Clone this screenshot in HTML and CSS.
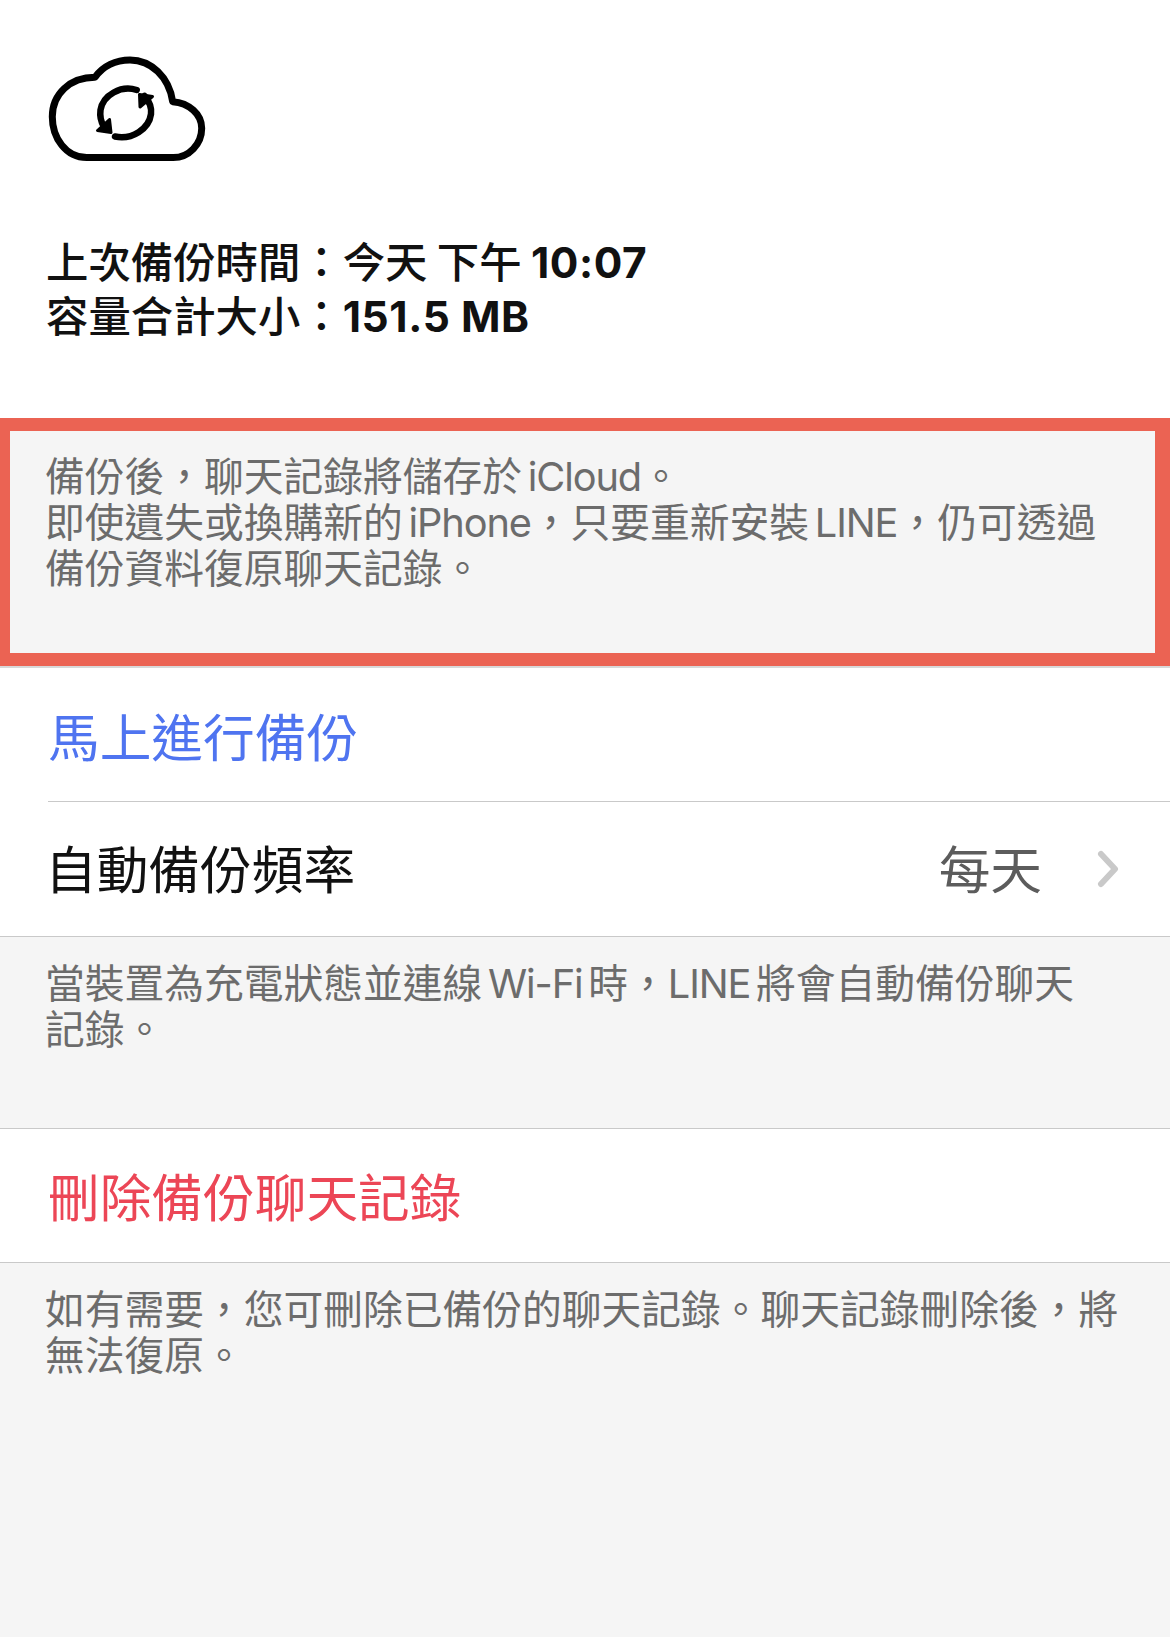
FILE: index.html
```html
<!DOCTYPE html>
<html lang="zh-Hant">
<head>
<meta charset="utf-8">
<title>備份聊天記錄</title>
<link rel="stylesheet" href="styles.css">
</head>
<body>
<section class="summary">
  <svg class="cloud" viewBox="27 25 160 108" aria-hidden="true">
    <path class="cloud-line" d="M66.7 127.6C46 127.6 32.3 108 32.3 86.7C32.3 64 50 47.3 75 47.3C83 36 96 30 110 30C131 30 149 47 152.7 71.7C169 73 181.7 84 181.7 98.3C181.7 114 169 127.6 153.3 127.6Z"/>
    <path class="sync-line" d="M116.7 60C101 55 83 65 80.5 80C79.7 86 81 92 84 97"/>
    <path class="sync-line" d="M95 106.5C112 110 129 99 131 84C131.8 77 129 71 124.5 66"/>
    <path class="sync-head" d="M77.5 100.5L91 102.5L89.5 89.5Z"/>
    <path class="sync-head" d="M132.5 66.5L119.5 64.5L120 77Z"/>
  </svg>
  <p class="stats">上次備份時間：今天 下午 <b class="stats-num">10:07</b><br>容量合計大小：<b class="stats-num">151.5 MB</b></p>
</section>
<section class="note note-marked">
  <p class="note-text">備份後，聊天記錄將儲存於 <span class="latin">iCloud</span>。<br>即使遺失或換購新的 <span class="latin">iPhone</span>，只要重新安裝 <span class="latin">LINE</span>，仍可透過<br>備份資料復原聊天記錄。</p>
</section>
<section class="group group-first">
  <div class="row row-link">馬上進行備份</div>
  <div class="row row-split">
    <span class="row-label">自動備份頻率</span>
    <span class="row-value">每天</span>
    <svg class="chevron" viewBox="0 0 24 38" aria-hidden="true"><path d="M5 4L19 19L5 34"/></svg>
  </div>
</section>
<section class="note note-auto">
  <p class="note-text">當裝置為充電狀態並連線 <span class="latin">Wi-Fi</span> 時，<span class="latin">LINE</span> 將會自動備份聊天<br>記錄。</p>
</section>
<section class="group">
  <div class="row row-danger">刪除備份聊天記錄</div>
</section>
<section class="note note-last">
  <p class="note-text">如有需要，您可刪除已備份的聊天記錄。聊天記錄刪除後，將<br>無法復原。</p>
</section>
</body>
</html>
```
FILE: styles.css
```css
* { box-sizing: border-box; }
html, body { margin: 0; padding: 0; }
body {
  width: 1170px;
  height: 1637px;
  overflow: hidden;
  background: #f5f5f5;
  font-family: Inter, "Noto Sans CJK TC", sans-serif;
}
p { margin: 0; }
.summary {
  height: 418px;
  background: #fff;
  padding: 55px 0 0 47px;
}
.cloud { display: block; width: 160px; height: 108px; }
.cloud-line, .sync-line {
  fill: none;
  stroke: #000;
  stroke-linejoin: round;
  stroke-linecap: round;
}
.cloud-line { stroke-width: 7; }
.sync-line { stroke-width: 6.5; }
.sync-head { fill: #000; stroke: #000; stroke-width: 3; stroke-linejoin: round; }
.stats {
  margin: 73px 0 0 -1px;
  font-size: 42.4px;
  line-height: 54px;
  font-weight: 500;
  color: #111;
  word-spacing: -2px;
}
.stats-num { font-weight: 700; letter-spacing: 0.6px; word-spacing: 0; }
.note-text {
  font-size: 39.75px;
  line-height: 46px;
  color: #6c6c6c;
  word-spacing: -5.5px;
}
.latin { letter-spacing: -1.1px; }
.note { padding-left: 45px; }
.note-marked {
  height: 248px;
  padding: 23px 0 0 35px;
  border-style: solid;
  border-color: #eb6353;
  border-width: 13px 15px 13px 10px;
  background: #f5f5f5;
}
.note-auto { height: 191px; padding-top: 24px; }
.note-last { padding-top: 24px; }
.group {
  background: #fff;
  border-top: 1px solid #c9c9c9;
  border-bottom: 1px solid #c9c9c9;
}
.group-first { height: 271px; border-top: 2px solid #d8d8d8; }
.row {
  display: flex;
  align-items: center;
  height: 133px;
  margin-left: 48px;
  font-size: 51.7px;
  color: #111;
}
.row-link { color: #4f74f0; height: 133px; padding-bottom: 1px; }
.row-split {
  border-top: 1px solid #c9c9c9;
  height: 135px;
  padding-right: 50px;
}
.row-label { flex: 1; margin: 0 0 6px -3px; }
.row-value { color: #5c5c5c; margin: 0 54px 6px 0; }
.row-danger { color: #ec4656; padding-bottom: 3px; }
.chevron { width: 24px; height: 38px; }
.chevron path {
  fill: none;
  stroke: #c9c9c9;
  stroke-width: 6;
  stroke-linecap: round;
  stroke-linejoin: round;
}
```
